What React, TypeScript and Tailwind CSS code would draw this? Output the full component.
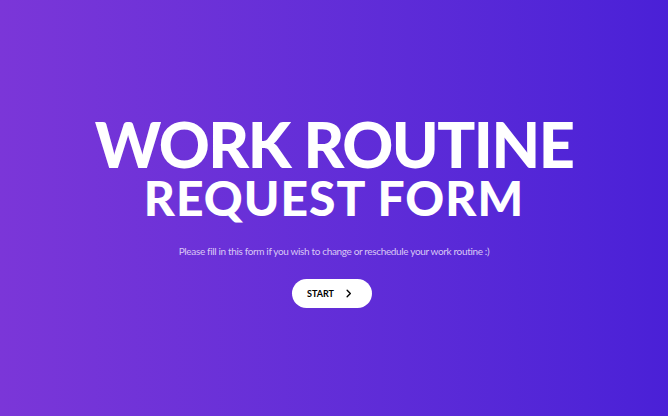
export default function App() {
  return (
    <div className="flex h-[416px] w-[668px] flex-col items-center bg-gradient-to-r from-[#7b36d8] to-[#4a20d7] font-['Lato',sans-serif] text-white">
      <h1 className="mt-[114.5px] flex flex-col items-center font-black">
        <span className="text-[63px] leading-[58px] tracking-[-1.5px]">WORK ROUTINE</span>
        <span className="mt-[1.5px] text-[48px] leading-[48px] tracking-[1px]">REQUEST FORM</span>
      </h1>
      <p className="mt-[22px] text-[10px] tracking-[-0.35px] text-[#d9c8f5]">
        Please fill in this form if you wish to change or reschedule your work routine :)
      </p>
      <button
        type="button"
        className="mr-[4px] mt-[20px] flex h-[29px] w-[80px] items-center justify-center gap-[9px] rounded-full bg-white pr-[3px] text-[9px] font-bold text-black"
      >
        START
        <svg viewBox="0 0 24 24" className="h-[11px] w-[11px]" fill="none" stroke="currentColor" strokeWidth={3} strokeLinecap="round" strokeLinejoin="round">
          <path d="M9 5l7 7-7 7" />
        </svg>
      </button>
    </div>
  );
}
